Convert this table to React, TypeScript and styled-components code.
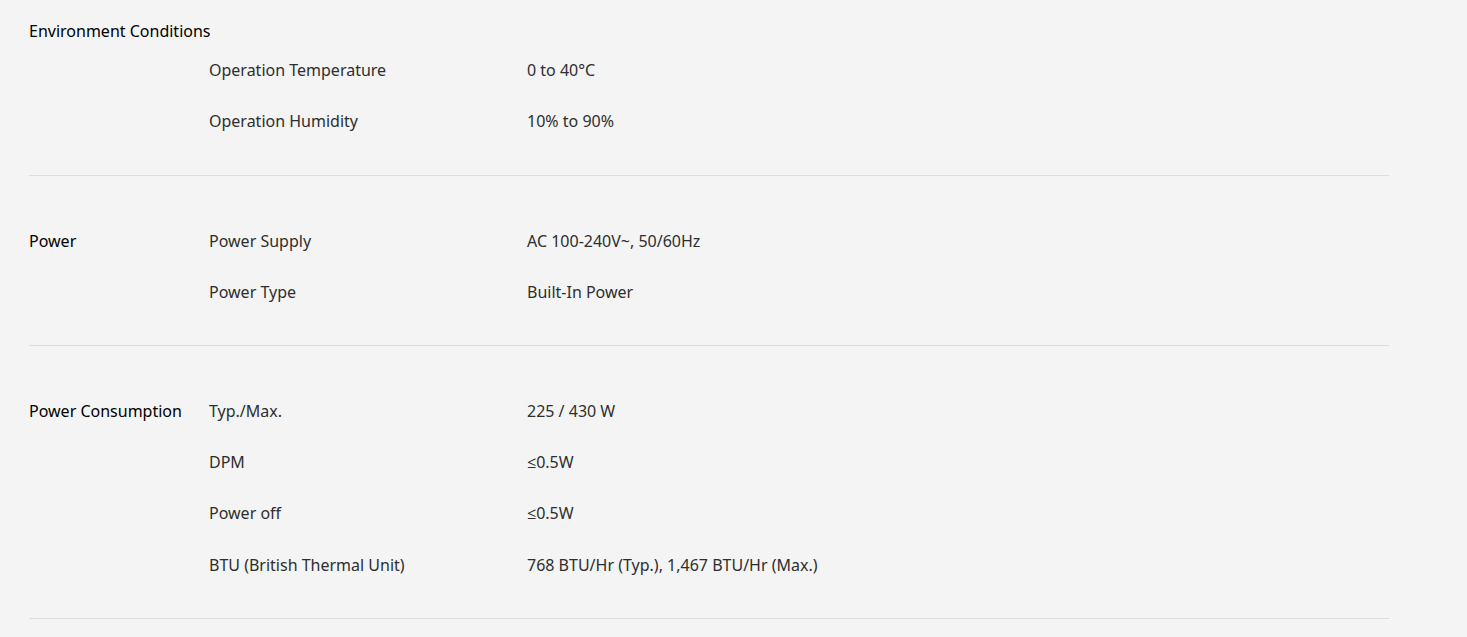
import React from "react";
import styled, { createGlobalStyle } from "styled-components";

interface SpecRow {
  label: string;
  value: string;
}

interface SpecGroup {
  title: string;
  stacked?: boolean;
  rows: SpecRow[];
}

const specs: SpecGroup[] = [
  {
    title: "Environment Conditions",
    stacked: true,
    rows: [
      { label: "Operation Temperature", value: "0 to 40°C" },
      { label: "Operation Humidity", value: "10% to 90%" },
    ],
  },
  {
    title: "Power",
    rows: [
      { label: "Power Supply", value: "AC 100-240V~, 50/60Hz" },
      { label: "Power Type", value: "Built-In Power" },
    ],
  },
  {
    title: "Power Consumption",
    rows: [
      { label: "Typ./Max.", value: "225 / 430 W" },
      { label: "DPM", value: "≤0.5W" },
      { label: "Power off", value: "≤0.5W" },
      { label: "BTU (British Thermal Unit)", value: "768 BTU/Hr (Typ.), 1,467 BTU/Hr (Max.)" },
    ],
  },
];

export default function App() {
  return (
    <>
      <GlobalStyle />
      <Page>
        {specs.map((group) => (
          <Group key={group.title} $stacked={group.stacked}>
            <GroupTitle $stacked={group.stacked}>{group.title}</GroupTitle>
            <RowList $stacked={group.stacked}>
              {group.rows.map((row) => (
                <Row key={row.label}>
                  <Label>{row.label}</Label>
                  <Value>{row.value}</Value>
                </Row>
              ))}
            </RowList>
          </Group>
        ))}
      </Page>
    </>
  );
}

const GlobalStyle = createGlobalStyle`
  html, body {
    margin: 0;
    background: #f3f4f3;
  }
  body {
    font-family: "Noto Sans", "Open Sans", Arial, sans-serif;
    -webkit-font-smoothing: antialiased;
  }
`;

const Page = styled.div`
  padding: 20px 0 0 29px;
  width: 1360px;
`;

const Group = styled.section<{ $stacked?: boolean }>`
  display: grid;
  grid-template-columns: ${(p) => (p.$stacked ? "1fr" : "180px 1fr")};
  padding: ${(p) => (p.$stacked ? "0" : "40px")} 0 27px;
  border-bottom: 1px solid #dcdddc;
`;

const GroupTitle = styled.h3<{ $stacked?: boolean }>`
  margin: 0;
  padding: ${(p) => (p.$stacked ? "0 0 2px" : "14px 0")};
  font-size: 16px;
  line-height: 23.2px;
  font-weight: 400;
  color: #000;
`;

const RowList = styled.dl<{ $stacked?: boolean }>`
  margin: 0;
  padding-left: ${(p) => (p.$stacked ? "180px" : "0")};
`;

const Row = styled.div`
  display: grid;
  grid-template-columns: 318px 1fr;
  padding: 14px 0;
`;

const Label = styled.dt`
  font-size: 16px;
  line-height: 23.2px;
  color: #2e2e2e;
`;

const Value = styled.dd`
  margin: 0;
  font-size: 16px;
  line-height: 23.2px;
  color: #2e2e2e;
`;
